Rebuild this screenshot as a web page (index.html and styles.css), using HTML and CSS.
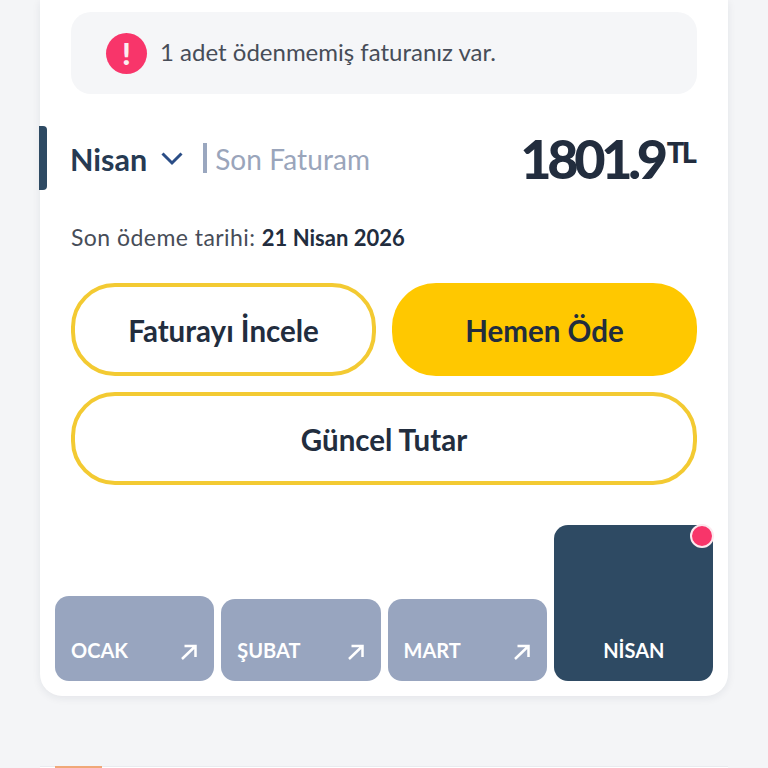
FILE: index.html
```html
<!DOCTYPE html>
<html lang="tr">
<head>
    <meta charset="UTF-8">
    <meta name="viewport" content="width=device-width, initial-scale=1.0">
    <title>Son Faturam</title>
    <link rel="stylesheet" href="styles.css">
</head>
<body>
    <section class="card">
        <div class="alert">
            <span class="alert-icon">!</span>
            <span class="alert-text">1 adet ödenmemiş faturanız var.</span>
        </div>

        <div class="summary">
            <span class="summary-marker"></span>
            <span class="month">Nisan</span>
            <svg class="chevron" width="24" height="15" viewBox="0 0 24 15" fill="none">
                <path d="M2.500 2.500L12 12l9.500-9.500" stroke="#2a4d86" stroke-width="3"/>
            </svg>
            <span class="divider"></span>
            <span class="last-bill">Son Faturam</span>
            <span class="amount">1801.9<sup class="currency">TL</sup></span>
        </div>

        <p class="due">Son ödeme tarihi: <strong>21 Nisan 2026</strong></p>

        <div class="actions">
            <button class="btn btn-outline">Faturayı İncele</button>
            <button class="btn btn-fill">Hemen Öde</button>
            <button class="btn btn-outline btn-wide">Güncel Tutar</button>
        </div>

        <div class="months">
            <div class="month-tile tile-first">
                <span>OCAK</span>
                <svg width="20" height="20" viewBox="0 0 20 20" fill="none"><path d="M3 17L16 4.500M5.500 4h11v11" stroke="#fff" stroke-width="2.500"/></svg>
            </div>
            <div class="month-tile">
                <span>ŞUBAT</span>
                <svg width="20" height="20" viewBox="0 0 20 20" fill="none"><path d="M3 17L16 4.500M5.500 4h11v11" stroke="#fff" stroke-width="2.500"/></svg>
            </div>
            <div class="month-tile">
                <span>MART</span>
                <svg width="20" height="20" viewBox="0 0 20 20" fill="none"><path d="M3 17L16 4.500M5.500 4h11v11" stroke="#fff" stroke-width="2.500"/></svg>
            </div>
            <div class="month-tile tile-active">
                <span>NİSAN</span>
                <i class="tile-dot"></i>
            </div>
        </div>
    </section>

    <section class="next-card">
        <span class="next-card-tab"></span>
    </section>
</body>
</html>
```

FILE: styles.css
```css
html, body {
    height: 768px;
    overflow: hidden;
}

body {
    margin: 0;
    padding: 0 40px;
    background-color: #f4f5f7;
    font-family: "Lato", "Noto Sans", sans-serif;
    color: #222d3e;
}

.card {
    background-color: #fff;
    height: 696px;
    box-sizing: border-box;
    padding: 12px 15px 15px 15px;
    border-radius: 0 0 22px 22px;
    box-shadow: 0 2px 8px rgba(30, 40, 60, 0.08);
    display: flex;
    flex-direction: column;
}

.alert {
    height: 82px;
    margin: 0 16px;
    padding-left: 35px;
    background-color: #f5f6f8;
    border-radius: 20px;
    display: flex;
    align-items: center;
    gap: 13px;
}

.alert-icon {
    width: 41px;
    height: 41px;
    border-radius: 50%;
    background-color: #f8356a;
    color: #fbeef0;
    font-size: 31px;
    font-weight: 900;
    display: flex;
    align-items: center;
    justify-content: center;
}

.alert-text {
    margin-top: -4px;
    font-size: 24px;
    color: #474d58;
}

.summary {
    position: relative;
    height: 64px;
    margin: 32px 16px 0;
    display: flex;
    align-items: center;
}

.summary-marker {
    position: absolute;
    left: -32px;
    top: 0;
    width: 8px;
    height: 64px;
    background-color: #2e4a63;
    border-radius: 0 4px 4px 0;
}

.month {
    margin-top: 2px;
    margin-left: -1px;
    font-size: 30.5px;
    font-weight: 700;
    color: #263a52;
}

.chevron {
    margin-left: 13px;
}

.divider {
    width: 4px;
    height: 30px;
    margin-left: 19px;
    background-color: #9aa7bf;
}

.last-bill {
    margin-top: 2px;
    margin-left: 8px;
    font-size: 28px;
    letter-spacing: 0.1px;
    color: #9aa5bb;
}

.amount {
    margin-left: auto;
    font-size: 54px;
    font-weight: 900;
    letter-spacing: -4.300px;
    color: #222d3e;
}

.currency {
    margin-left: 3px;
    padding-right: 2.500px;
    font-size: 29px;
    vertical-align: 16px;
    line-height: 0;
    letter-spacing: -2.500px;
}

.due {
    margin: 33px 16px 0;
    font-size: 23px;
    line-height: 28px;
    letter-spacing: 0.450px;
    color: #474d58;
}

.due strong {
    font-size: 22px;
    letter-spacing: 0;
    color: #222d3e;
}

.actions {
    margin: 31px 16px 0;
    display: grid;
    grid-template-columns: 1fr 1fr;
    gap: 16px;
}

.btn {
    height: 93px;
    padding-top: 3px;
    border-radius: 44px;
    font-family: inherit;
    font-size: 29.5px;
    font-weight: 700;
    color: #222d3e;
}

.btn-outline {
    background-color: #fff;
    border: 4px solid #f3ca32;
}

.btn-fill {
    background-color: #ffc800;
    border: none;
}

.btn-wide {
    grid-column: 1 / 3;
}

.months {
    margin-top: auto;
    display: flex;
    align-items: flex-end;
    gap: 7px;
}

.month-tile {
    position: relative;
    flex: 1;
    height: 82px;
    box-sizing: border-box;
    padding: 0 15px 19px 16px;
    background-color: #98a5bf;
    border-radius: 14px;
    color: #fff;
    font-size: 20px;
    font-weight: 700;
    display: flex;
    align-items: flex-end;
    justify-content: space-between;
}

.tile-first {
    height: 85px;
}

.tile-active {
    height: 156px;
    justify-content: center;
    background-color: #2e4a63;
}

.tile-dot {
    position: absolute;
    top: -1px;
    right: -1px;
    width: 20px;
    height: 20px;
    border: 2px solid #fde8ee;
    border-radius: 50%;
    background-color: #f8356a;
}

.next-card {
    position: relative;
    height: 2px;
    margin-top: 70px;
    background-color: #fff;
    border-top: 1px solid #e9ebef;
    box-sizing: border-box;
}

.next-card-tab {
    position: absolute;
    left: 15px;
    top: -1px;
    width: 47px;
    height: 2px;
    background-color: #f0a878;
}
```
